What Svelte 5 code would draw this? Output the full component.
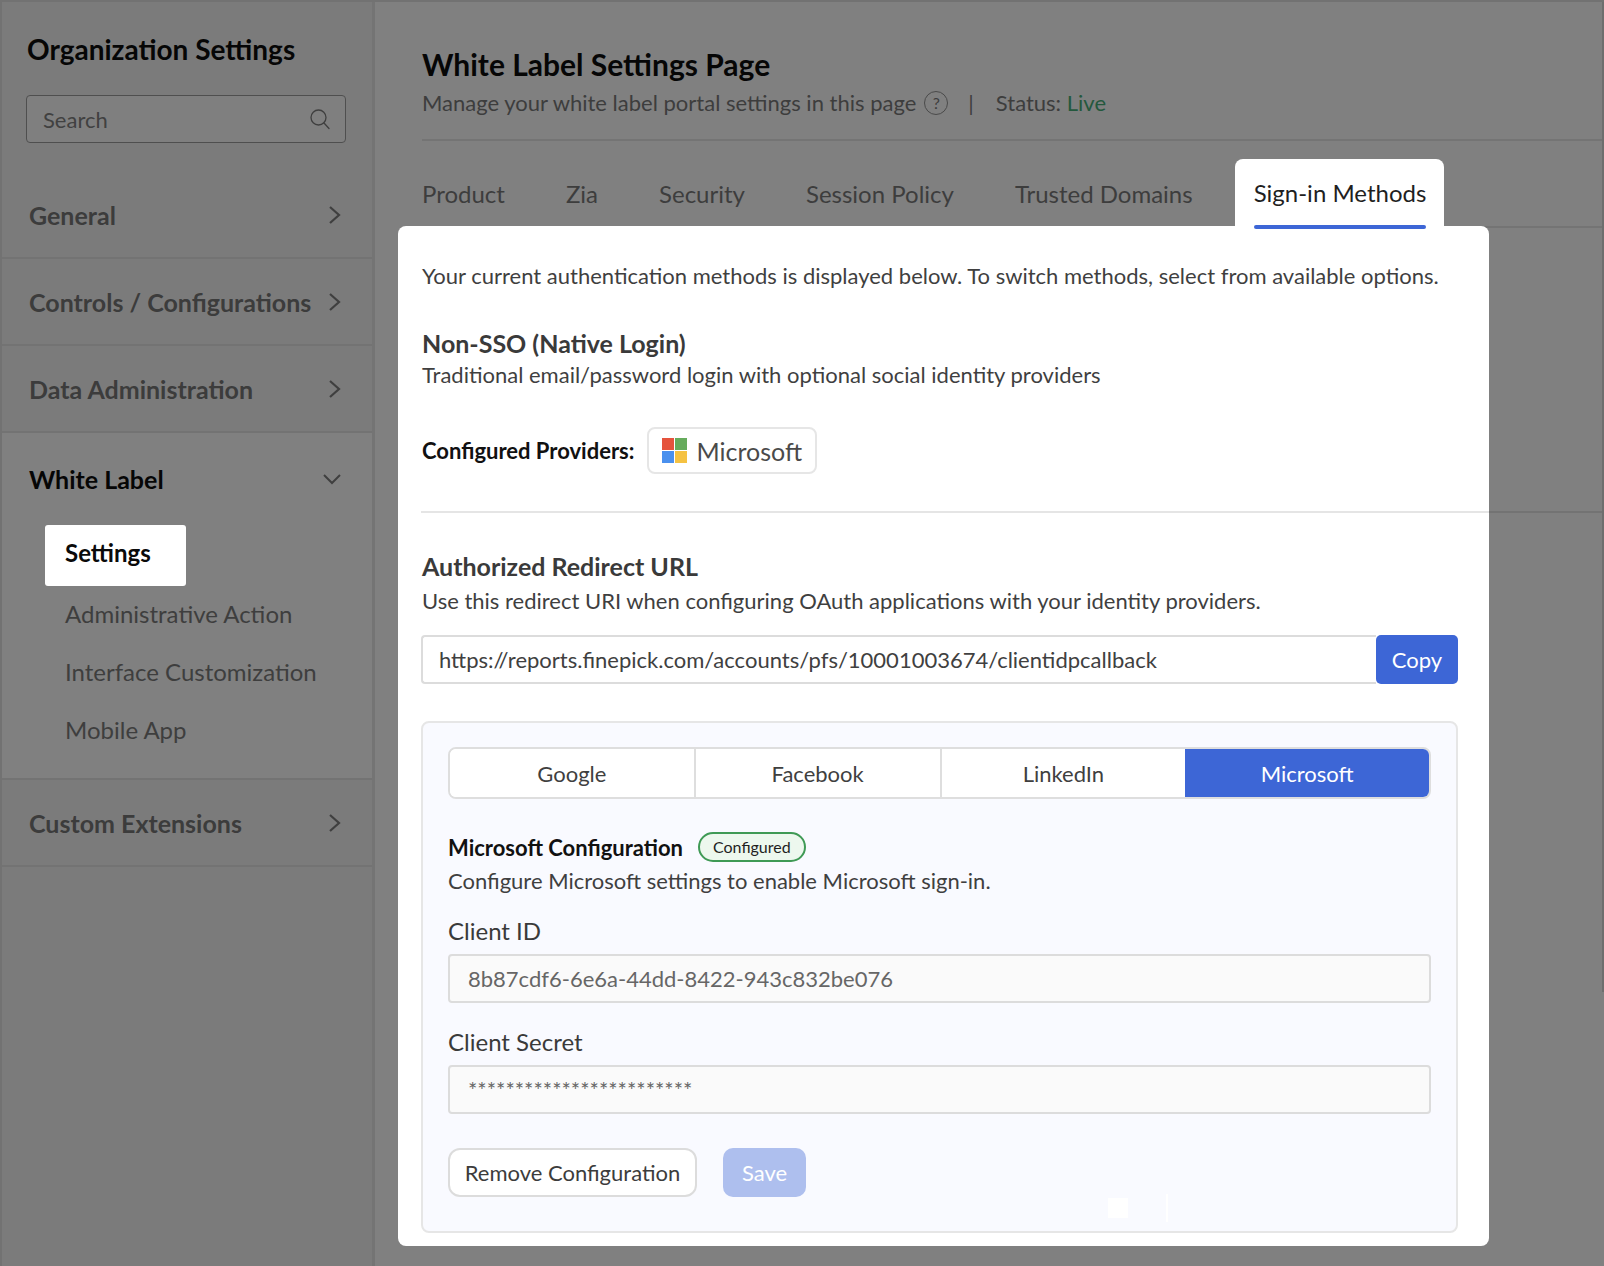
<script>
  const navTop = ["General", "Controls / Configurations", "Data Administration"];
  const subItems = ["Settings", "Administrative Action", "Interface Customization", "Mobile App"];
  const tabs = ["Product", "Zia", "Security", "Session Policy", "Trusted Domains"];
  const providers = ["Google", "Facebook", "LinkedIn", "Microsoft"];
</script>

<div class="page">
  <aside class="sidebar">
    <h2 class="org-title">Organization Settings</h2>
    <div class="search">
      <span>Search</span>
      <svg width="22" height="22" viewBox="0 0 22 22" fill="none" stroke="#3f3f3f" stroke-width="1.3">
        <circle cx="9.5" cy="9.5" r="7.5" />
        <path d="M15 15l5 5.5" stroke-linecap="round" />
      </svg>
    </div>

    <nav class="nav">
      {#each navTop as item}
        <div class="nav-row">
          <span>{item}</span>
          <svg class="chev" width="14" height="20" viewBox="0 0 14 20" fill="none" stroke="#3f3f3f" stroke-width="2.2">
            <path d="M2 2l9 8-9 8" />
          </svg>
        </div>
      {/each}
      <div class="nav-group">
        <div class="nav-row open">
          <span>White Label</span>
          <svg class="chev-down" width="20" height="14" viewBox="0 0 20 14" fill="none" stroke="#3f3f3f" stroke-width="2">
            <path d="M2 3l8 8 8-8" />
          </svg>
        </div>
        <ul class="sub">
          {#each subItems as item, i}
            <li class:active={i === 0}>{item}</li>
          {/each}
        </ul>
      </div>
      <div class="nav-row">
        <span>Custom Extensions</span>
        <svg class="chev" width="14" height="20" viewBox="0 0 14 20" fill="none" stroke="#3f3f3f" stroke-width="2.2">
          <path d="M2 2l9 8-9 8" />
        </svg>
      </div>
    </nav>
  </aside>

  <main class="main">
    <header class="head">
      <h1>White Label Settings Page</h1>
      <div class="head-sub">
        <span>Manage your white label portal settings in this page</span>
        <span class="help">?</span>
        <span class="pipe">|</span>
        <span>Status: <span class="live">Live</span></span>
      </div>
    </header>

    <div class="tabs">
      {#each tabs as tab}
        <span class="tab">{tab}</span>
      {/each}
      <span class="tab current">Sign-in Methods</span>
    </div>

    <section class="card">
      <p class="intro">Your current authentication methods is displayed below. To switch methods, select from available options.</p>
      <h3 class="sec-title first">Non-SSO (Native Login)</h3>
      <p class="sec-desc">Traditional email/password login with optional social identity providers</p>

      <div class="configured">
        <strong>Configured Providers:</strong>
        <span class="chip">
          <svg width="25" height="25" viewBox="0 0 25 25">
            <rect width="12" height="12" fill="#e5533d" />
            <rect x="13" width="12" height="12" fill="#66ab5c" />
            <rect y="13" width="12" height="12" fill="#4a90ee" />
            <rect x="13" y="13" width="12" height="12" fill="#f5c242" />
          </svg>
          Microsoft
        </span>
      </div>

      <div class="rule"></div>

      <h3 class="sec-title">Authorized Redirect URL</h3>
      <p class="sec-desc redirect">Use this redirect URI when configuring OAuth applications with your identity providers.</p>

      <div class="url-row">
        <div class="url">https://reports.finepick.com/accounts/pfs/10001003674/clientidpcallback</div>
        <button class="copy">Copy</button>
      </div>

      <div class="panel">
        <div class="segments">
          {#each providers as p}
            <button class="seg" class:on={p === "Microsoft"}>{p}</button>
          {/each}
        </div>

        <div class="conf-head">
          <strong>Microsoft Configuration</strong>
          <span class="badge">Configured</span>
        </div>
        <p class="conf-desc">Configure Microsoft settings to enable Microsoft sign-in.</p>

        <div class="label">Client ID</div>
        <div class="field">8b87cdf6-6e6a-44dd-8422-943c832be076</div>

        <div class="label second">Client Secret</div>
        <div class="field">************************</div>

        <div class="actions">
          <button class="btn-remove">Remove Configuration</button>
          <button class="btn-save">Save</button>
        </div>

        <span class="speck"></span>
        <span class="speck-line"></span>
      </div>
    </section>
  </main>
  <div class="scrollbar"></div>
</div>

<style>
  :global(body) {
    margin: 0;
    background: #808080;
  }

  .page {
    position: relative;
    display: flex;
    width: 1604px;
    height: 1266px;
    overflow: hidden;
    box-sizing: border-box;
    border-top: 2px solid #727272;
    font-family: Lato, "Liberation Sans", sans-serif;
    color: #3d3d3d;
  }

  .sidebar {
    width: 375px;
    flex: none;
    box-sizing: border-box;
    background: #7b7b7b;
    border-left: 2px solid #727272;
    border-right: 3px solid #747474;
  }

  .org-title {
    margin: 27px 0 0 25px;
    font-size: 28px;
    line-height: 40px;
    font-weight: 700;
    color: #060606;
  }

  .search {
    display: flex;
    align-items: center;
    justify-content: space-between;
    box-sizing: border-box;
    width: 320px;
    height: 48px;
    margin: 26px 0 0 24px;
    padding: 0 14px 0 16px;
    border: 1.5px solid #4f4f4f;
    border-radius: 4px;
    background: #7f7f7f;
    font-size: 22px;
    color: #414141;
  }

  .nav {
    margin-top: 29px;
  }

  .nav-row {
    display: flex;
    align-items: center;
    justify-content: space-between;
    height: 87px;
    box-sizing: border-box;
    padding: 0 30px 0 27px;
    border-bottom: 2px solid #737373;
    font-size: 25px;
    font-weight: 700;
    color: #3c3c3c;
  }

  .nav-group {
    background: #808080;
    border-bottom: 2px solid #737373;
    height: 347px;
    box-sizing: border-box;
  }

  .nav-row.open {
    border-bottom: none;
    height: 92px;
    color: #060606;
    padding-right: 30px;
  }

  .sub {
    list-style: none;
    margin: 0 0 0 43px;
    padding: 0;
    font-size: 24px;
    color: #3e3e3e;
  }

  .sub li {
    width: 141px;
    height: 58px;
    line-height: 56px;
    box-sizing: border-box;
    padding-left: 20px;
    white-space: nowrap;
    border-radius: 3px;
  }

  .sub li.active {
    height: 61px;
    background: #fff;
    font-weight: 700;
    color: #0a0a0a;
  }

  .main {
    flex: 1;
    min-width: 0;
    padding-left: 47px;
  }

  .head {
    height: 139px;
    box-sizing: border-box;
    padding-top: 41px;
    border-bottom: 2px solid #747474;
  }

  .head h1 {
    margin: 0;
    font-size: 30px;
    line-height: 42px;
    font-weight: 700;
    color: #060606;
  }

  .head-sub {
    display: flex;
    align-items: center;
    margin-top: 2px;
    font-size: 22px;
    line-height: 32px;
    color: #3d3d3d;
  }

  .help {
    display: inline-flex;
    align-items: center;
    justify-content: center;
    width: 24px;
    height: 24px;
    margin-left: 8px;
    box-sizing: border-box;
    border: 1.5px solid #4a4a4a;
    border-radius: 50%;
    font-size: 16px;
  }

  .pipe {
    margin: 0 22px 0 20px;
  }

  .live {
    color: #24583d;
  }

  .tabs {
    display: flex;
    align-items: flex-end;
    height: 87px;
    box-sizing: border-box;
    border-bottom: 2px solid #747474;
    font-size: 24px;
    color: #3d3d3d;
  }

  .tab {
    height: 66px;
    line-height: 68px;
    margin-right: 61px;
  }

  .tab.current {
    position: relative;
    z-index: 2;
    margin-left: -19px;
    margin-right: 0;
    padding: 0 18px 0 19px;
    background: #fff;
    border-radius: 8px 8px 0 0;
    color: #1f1f1f;
    height: 67px;
  }

  .tab.current::after {
    content: "";
    position: absolute;
    left: 19px;
    right: 18px;
    bottom: -3px;
    height: 4px;
    border-radius: 2px;
    background: #3d66d6;
  }

  .card {
    position: relative;
    z-index: 1;
    box-sizing: border-box;
    width: 1091px;
    height: 1020px;
    margin: -2px 0 0 -24px;
    padding: 0 31px 0 24px;
    background: #fff;
    border-radius: 8px;
  }

  .intro,
  .sec-desc {
    margin: 0;
    font-size: 22px;
    line-height: 30px;
    color: #3f3f3f;
    white-space: nowrap;
  }

  .intro {
    padding-top: 35px;
  }

  .sec-title {
    margin: 0;
    font-size: 25px;
    line-height: 34px;
    font-weight: 700;
    color: #3a3a3a;
  }

  .sec-title.first {
    margin-top: 35px;
  }

  .configured {
    display: flex;
    align-items: center;
    margin-top: 37px;
    font-size: 22px;
    color: #111;
  }

  .chip {
    display: inline-flex;
    align-items: center;
    gap: 9px;
    box-sizing: border-box;
    height: 47px;
    margin-left: 13px;
    padding: 0 13px;
    border: 2px solid #e6e6e6;
    border-radius: 8px;
    font-size: 25px;
    color: #4a4a4a;
  }

  .rule {
    height: 2px;
    margin: 37px -144px 0 -1px;
    background: rgba(0, 0, 0, 0.1);
  }

  .rule + .sec-title {
    margin-top: 36px;
  }

  .sec-desc.redirect {
    margin-top: 3px;
  }

  .url-row {
    display: flex;
    height: 49px;
    margin: 19px 0 0 -1px;
  }

  .url {
    flex: 1;
    box-sizing: border-box;
    padding-left: 16px;
    line-height: 46px;
    border: 2px solid #dcdcdc;
    border-right: none;
    border-radius: 4px 0 0 4px;
    font-size: 22px;
    color: #404040;
  }

  .copy {
    width: 82px;
    padding: 0;
    border: none;
    border-radius: 5px;
    background: #3d66d6;
    color: #fff;
    font: 22px Lato, sans-serif;
  }

  .panel {
    position: relative;
    box-sizing: border-box;
    height: 512px;
    margin: 37px 0 0 -1px;
    padding: 24px 25px 0;
    background: #f9faff;
    border: 2px solid #e6e6e6;
    border-radius: 8px;
  }

  .segments {
    display: flex;
    height: 52px;
    box-sizing: border-box;
    border: 2px solid #dedede;
    border-radius: 8px;
    background: #fff;
    overflow: hidden;
  }

  .seg {
    flex: 1;
    padding: 0;
    border: none;
    border-left: 2px solid #dedede;
    background: #fff;
    color: #3f3f3f;
    font: 22px Lato, sans-serif;
  }

  .seg:first-child {
    border-left: none;
  }

  .seg.on {
    background: #3d66d6;
    border-left: none;
    color: #fff;
  }

  .conf-head {
    display: flex;
    align-items: center;
    gap: 15px;
    margin-top: 33px;
    height: 30px;
    font-size: 22px;
    color: #111;
  }

  .badge {
    box-sizing: border-box;
    height: 30px;
    padding: 0 13px;
    line-height: 26px;
    border: 2px solid #3f9a55;
    border-radius: 15px;
    background: #edf8ee;
    font-size: 16px;
    color: #1f1f1f;
  }

  .conf-desc {
    margin: 4px 0 0;
    font-size: 22px;
    line-height: 30px;
    color: #3f3f3f;
  }

  .label {
    margin-top: 19px;
    font-size: 24px;
    line-height: 32px;
    color: #3a3a3a;
  }

  .label.second {
    margin-top: 23px;
  }

  .field {
    box-sizing: border-box;
    height: 49px;
    margin-top: 7px;
    padding-left: 18px;
    line-height: 46px;
    border: 2px solid #dcdcdc;
    border-radius: 4px;
    background: #fafafa;
    font-size: 22px;
    color: #666;
  }

  .actions {
    display: flex;
    gap: 26px;
    margin-top: 34px;
  }

  .btn-remove {
    width: 249px;
    height: 49px;
    padding: 0;
    border: 2px solid #dcdcdc;
    border-radius: 12px;
    background: #fff;
    color: #3c3c3c;
    font: 22px Lato, sans-serif;
  }

  .btn-save {
    width: 83px;
    height: 49px;
    padding: 0;
    border: none;
    border-radius: 10px;
    background: #aebfee;
    color: #fff;
    font: 22px Lato, sans-serif;
  }

  .speck {
    position: absolute;
    left: 685px;
    top: 475px;
    width: 20px;
    height: 20px;
    background: #fff;
  }

  .speck-line {
    position: absolute;
    left: 743px;
    top: 471px;
    width: 2px;
    height: 28px;
    background: #fff;
  }

  .scrollbar {
    position: absolute;
    right: 0;
    top: 0;
    width: 2px;
    height: 990px;
    background: #6e6e6e;
  }
</style>
